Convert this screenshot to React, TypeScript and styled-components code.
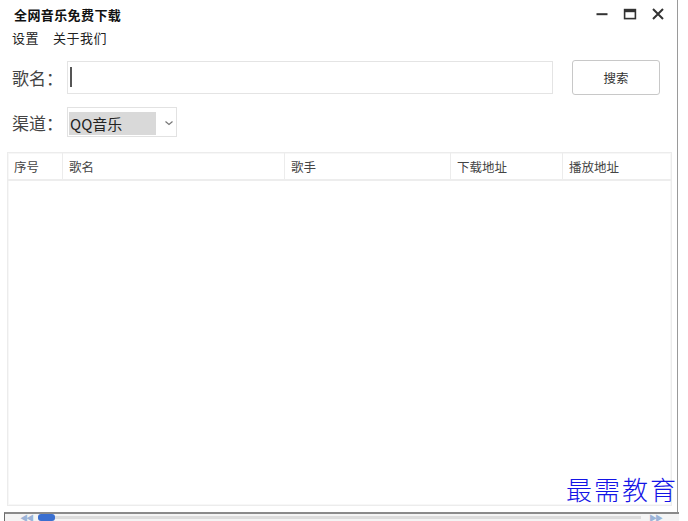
import React from "react";
import styled, { createGlobalStyle } from "styled-components";

const Global = createGlobalStyle`
  html, body { margin: 0; padding: 0; background: #fff; }
  body { font-family: "Noto Sans CJK SC", "Noto Sans", sans-serif; }
  * { box-sizing: border-box; }
`;

const Window = styled.div`
  position: relative;
  width: 688px;
  height: 521px;
  overflow: hidden;
  background: #fff;
`;

const Frame = styled.div`
  width: 678px;
  height: 512px;
  border-right: 1px solid #9a9a9a;
  display: flex;
  flex-direction: column;
`;

const TitleBar = styled.div`
  height: 26px;
  display: flex;
  align-items: center;
  justify-content: space-between;
  padding: 0 12px 0 14px;
`;

const Title = styled.div`
  font-size: 13px;
  font-weight: 700;
  color: #111;
  letter-spacing: 0.4px;
  padding-top: 2px;
`;

const WinButtons = styled.div`
  display: flex;
  align-items: center;
  gap: 14px;
  padding-top: 1px;
`;

const WinBtn = styled.svg`
  width: 14px;
  height: 14px;
  display: block;
`;

const Menu = styled.div`
  display: flex;
  gap: 14px;
  padding: 0 0 0 12px;
  height: 22px;
  align-items: center;
  font-size: 13px;
  letter-spacing: 0.5px;
  color: #222;
`;

const Form = styled.div`
  display: flex;
  flex-direction: column;
  padding: 11px 0 0 12px;
`;

const Row = styled.div`
  display: flex;
  align-items: center;
`;

const Label = styled.div<{ $top?: number }>`
  width: 55px;
  font-size: 17px;
  color: #444;
  margin-top: ${(p) => p.$top ?? 0}px;
`;

const Input = styled.div`
  width: 486px;
  height: 33px;
  border: 1px solid #e4e4e4;
  display: flex;
  align-items: center;
  padding-left: 2px;
`;

const Caret = styled.div`
  width: 2px;
  height: 20px;
  background: #555;
`;

const SearchBtn = styled.div`
  margin-left: 19px;
  width: 88px;
  height: 35px;
  border: 1px solid #c8c8c8;
  border-radius: 3px;
  display: flex;
  align-items: center;
  justify-content: center;
  font-size: 12.5px;
  color: #333;
  margin-top: 1px;
`;

const SelectBox = styled.div`
  margin-top: 12px;
  width: 110px;
  height: 30px;
  border: 1px solid #e2e2e2;
  display: flex;
  align-items: center;
  padding: 0 0 0 1px;
`;

const SelectValue = styled.div`
  width: 87px;
  height: 23px;
  background: #d9d9d9;
  font-size: 15px;
  color: #222;
  display: flex;
  align-items: center;
  padding-left: 1px;
  margin-top: 2px;
`;

const Chevron = styled.svg`
  width: 10px;
  height: 8px;
  margin-left: 8px;
  margin-top: 1px;
`;

const Table = styled.div`
  margin: 15px 0 0 7px;
  width: 665px;
  height: 354px;
  border: 1px solid #ececec;
  box-shadow: inset 0 0 0 1px #f7f7f7;
  display: flex;
  flex-direction: column;
`;

const Header = styled.div`
  height: 28px;
  display: grid;
  grid-template-columns: 55px 222px 166px 112px 1fr;
  border-bottom: 2px solid #ededed;
`;

const HeadCell = styled.div<{ $last?: boolean }>`
  font-size: 12.5px;
  color: #444;
  display: flex;
  align-items: center;
  padding-left: 6px;
  border-right: ${(p) => (p.$last ? "none" : "1px solid #ececec")};
`;

const ScrollBar = styled.div`
  position: relative;
  height: 9px;
  width: 675px;
  margin-left: 4px;
  border-top: 2px solid #8a8a8a;
  border-left: 1px solid #6a6a6a;
  background: #f4f4f4;
  display: flex;
  align-items: center;
`;

const Arrow = styled.span<{ $left?: number; $right?: number }>`
  font-size: 8px;
  color: #9bb4d8;
  letter-spacing: -2px;
  line-height: 1;
  margin-left: ${(p) => p.$left ?? 0}px;
  margin-right: ${(p) => p.$right ?? 0}px;
`;

const Track = styled.div`
  flex: 1;
  height: 3px;
  margin: 0 8px 0 6px;
  background: #dcdcdc;
  position: relative;
`;

const Thumb = styled.div`
  position: absolute;
  left: 0;
  top: -2px;
  width: 17px;
  height: 7px;
  border-radius: 3px;
  background: #3a6fd0;
`;

const Watermark = styled.div`
  position: absolute;
  left: 566px;
  top: 470px;
  font-size: 26px;
  color: #1414e6;
  font-family: "Noto Sans CJK SC", serif;
  font-weight: 300;
  letter-spacing: 2px;
`;

const cols = ["序号", "歌名", "歌手", "下载地址", "播放地址"];

export default function App() {
  return (
    <Window>
      <Global />
      <Frame>
        <TitleBar>
          <Title>全网音乐免费下载</Title>
          <WinButtons>
            <WinBtn viewBox="0 0 14 14">
              <rect x="1.5" y="6.2" width="11" height="2" fill="#333" />
            </WinBtn>
            <WinBtn viewBox="0 0 14 14">
              <rect x="1.6" y="2.6" width="10.8" height="9" fill="none" stroke="#333" strokeWidth="1.6" />
              <rect x="1.6" y="2.6" width="10.8" height="2.6" fill="#333" />
            </WinBtn>
            <WinBtn viewBox="0 0 14 14">
              <path d="M2 2 L12 12 M12 2 L2 12" stroke="#333" strokeWidth="2" />
            </WinBtn>
          </WinButtons>
        </TitleBar>
        <Menu>
          <span>设置</span>
          <span>关于我们</span>
        </Menu>
        <Form>
          <Row>
            <Label>歌名：</Label>
            <Input>
              <Caret />
            </Input>
            <SearchBtn>搜索</SearchBtn>
          </Row>
          <Row>
            <Label $top={12}>渠道：</Label>
            <SelectBox>
              <SelectValue>QQ音乐</SelectValue>
              <Chevron viewBox="0 0 10 8">
                <path d="M1.5 2.5 L5 5.5 L8.5 2.5" fill="none" stroke="#777" strokeWidth="1.2" />
              </Chevron>
            </SelectBox>
          </Row>
        </Form>
        <Table>
          <Header>
            {cols.map((c, i) => (
              <HeadCell key={c} $last={i === cols.length - 1}>
                {c}
              </HeadCell>
            ))}
          </Header>
        </Table>
      </Frame>
      <ScrollBar>
        <Arrow $left={15}>◀◀</Arrow>
        <Track>
          <Thumb />
        </Track>
        <Arrow $right={18}>▶▶</Arrow>
      </ScrollBar>
      <Watermark>最需教育</Watermark>
    </Window>
  );
}
